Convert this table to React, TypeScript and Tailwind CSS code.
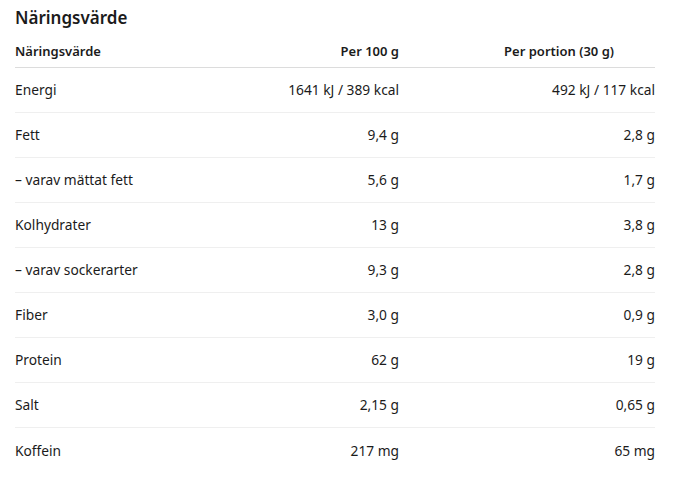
const rows: [string, string, string][] = [
  ['Energi', '1641 kJ / 389 kcal', '492 kJ / 117 kcal'],
  ['Fett', '9,4 g', '2,8 g'],
  ['– varav mättat fett', '5,6 g', '1,7 g'],
  ['Kolhydrater', '13 g', '3,8 g'],
  ['– varav sockerarter', '9,3 g', '2,8 g'],
  ['Fiber', '3,0 g', '0,9 g'],
  ['Protein', '62 g', '19 g'],
  ['Salt', '2,15 g', '0,65 g'],
  ['Koffein', '217 mg', '65 mg'],
];

export default function App() {
  return (
    <div
      className="min-h-[485px] w-[684px] bg-white px-[15px] pt-[7px] text-[#1b1b1b]"
      style={{ fontFamily: '"Noto Sans", "Open Sans", sans-serif' }}
    >
      <h2 className="text-[17px] font-semibold leading-[22px]">Näringsvärde</h2>
      <div className="w-[640px]">
        <div className="flex h-[39px] items-center border-b border-[#dcdcdc] pt-[8px] text-[13px] font-semibold">
          <div className="flex-1">Näringsvärde</div>
          <div className="w-[160px] text-right">Per 100 g</div>
          <div className="w-[256px] pr-[41px] text-right">Per portion (30 g)</div>
        </div>
        {rows.map(([name, per100, portion], i) => (
          <div
            key={name}
            className={`flex h-[45px] items-center pt-[1px] text-[13.75px] ${i < rows.length - 1 ? 'border-b border-[#efefef]' : ''}`}
          >
            <div className="flex-1">{name}</div>
            <div className="w-[160px] text-right">{per100}</div>
            <div className="w-[256px] text-right">{portion}</div>
          </div>
        ))}
      </div>
    </div>
  );
}
